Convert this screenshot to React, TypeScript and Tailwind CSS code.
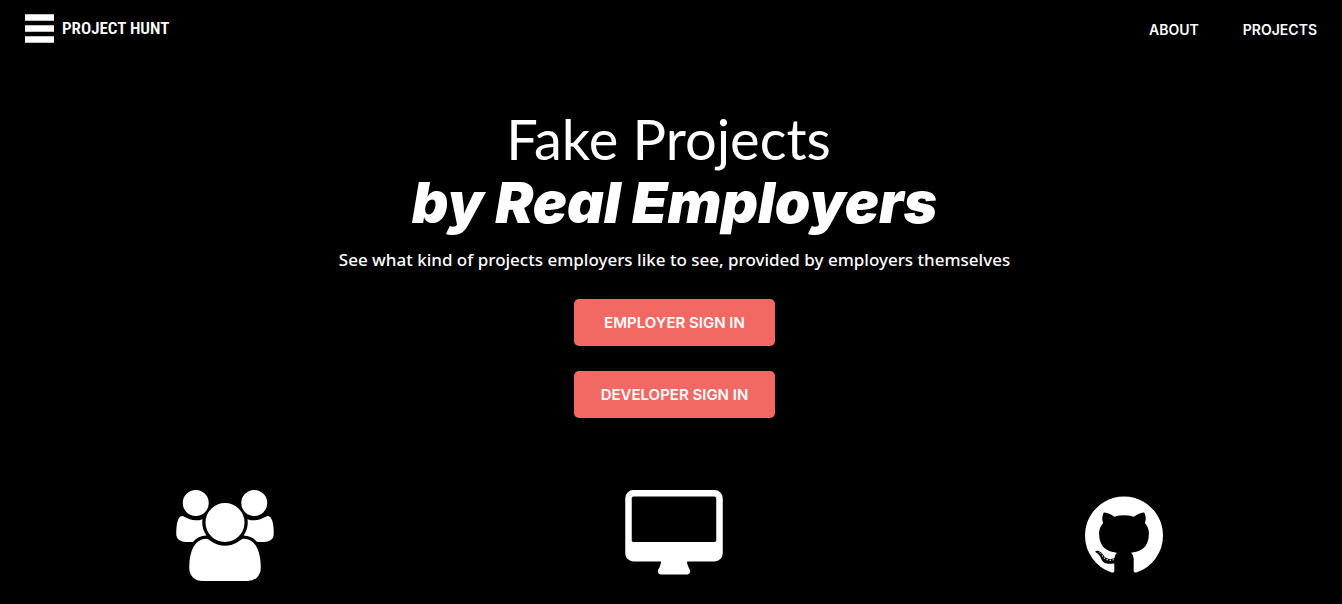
import React from "react";

type IconProps = { viewBox: string; path: string; className: string };

function Icon({ viewBox, path, className }: IconProps) {
  return (
    <svg viewBox={viewBox} className={className} fill="currentColor" aria-hidden="true">
      <path d={path} />
    </svg>
  );
}

const USERS =
  "M593 896q-162 5-265 128h-134q-82 0-138-40.5t-56-118.5q0-353 124-353 6 0 43.5 21t97.5 42.5 119 21.5q67 0 133-23-5 37-5 66 0 139 81 256zm1071 637q0 120-73 189.5t-194 69.5h-874q-121 0-194-69.5t-73-189.5q0-53 3.5-103.5t14-109 26.5-108.5 43-97.5 62-81 85.5-53.5 111.5-20q10 0 43 21.5t73 48 107 48 135 21.5 135-21.5 107-48 73-48 43-21.5q61 0 111.5 20t85.5 53.5 62 81 43 97.5 26.5 108.5 14 109 3.5 103.5zm-1024-1277q0 106-75 181t-181 75-181-75-75-181 75-181 181-75 181 75 75 181zm704 384q0 159-112.5 271.5t-271.5 112.5-271.5-112.5-112.5-271.5 112.5-271.5 271.5-112.5 271.5 112.5 112.5 271.5zm576 225q0 78-56 118.5t-138 40.5h-134q-103-123-265-128 81-117 81-256 0-29-5-66 66 23 133 23 59 0 119-21.5t97.5-42.5 43.5-21q124 0 124 353zm-128-609q0 106-75 181t-181 75-181-75-75-181 75-181 181-75 181 75 75 181z";

const DESKTOP =
  "M1792 992v-832q0-13-9.5-22.5t-22.5-9.5h-1600q-13 0-22.5 9.5t-9.5 22.5v832q0 13 9.5 22.5t22.5 9.5h1600q13 0 22.5-9.5t9.5-22.5zm128-832v1088q0 66-47 113t-113 47h-544q0 37 16 77.5t32 71 16 43.5q0 26-19 45t-45 19h-512q-26 0-45-19t-19-45q0-14 16-44t32-70 16-78h-544q-66 0-113-47t-47-113v-1088q0-66 47-113t113-47h1600q66 0 113 47t47 113z";

const GITHUB =
  "M768 128q209 0 385.5 103t279.5 279.5 103 385.5q0 251-146.5 451.5t-378.5 277.5q-27 5-40-7t-13-30q0-3 .5-76.5t.5-134.5q0-97-52-142 57-6 102.5-18t94-39 81-66.5 53-105 20.5-150.5q0-119-79-206 37-91-8-204-28-9-81 11t-92 44l-38 24q-93-26-192-26t-192 26q-16-11-42.5-27t-83.5-38.5-85-13.5q-45 113-8 204-79 87-79 206 0 85 20.5 150t52.5 105 80.5 67 94 39 102.5 18q-39 36-49 103-21 10-45 15t-57 5-65.5-21.5-55.5-62.5q-19-32-48.5-52t-49.5-24l-20-3q-21 0-29 4.5t-5 11.5 9 14 13 12l7 5q22 10 43.5 38t31.5 51l10 23q13 38 44 61.5t67 30 69.5 7 55.5-3.5l23-4q0 38 .5 88.5t.5 54.5q0 18-13 30t-40 7q-232-77-378.5-277.5t-146.5-451.5q0-209 103-385.5t279.5-279.5 385.5-103zm-477 1103q3-7-7-12-10-3-13 2-3 7 7 12 9 6 13-2zm31 34q7-5-2-16-10-9-16-3-7 5 2 16 10 10 16 3zm30 45q9-7 0-19-8-13-17-6-9 5 0 18t17 7zm42 42q8-8-4-19-12-12-20-3-9 8 4 19 12 12 20 3zm57 25q3-11-13-16-15-4-19 7t13 15q15 6 19-6zm63 5q0-13-17-11-16 0-16 11 0 13 17 11 16 0 16-11zm58-10q-2-11-18-9-16 3-14 15t18 8 14-14z";

function SignInButton({ children }: { children: React.ReactNode }) {
  return (
    <button
      type="button"
      className="h-[47px] w-[201px] rounded-[5px] bg-[#f26964] pt-px font-['Inter',sans-serif] text-[15px] font-semibold text-white hover:bg-[#e85b56]"
    >
      {children}
    </button>
  );
}

export default function App() {
  return (
    <div className="min-h-screen overflow-x-hidden bg-black font-['Lato',sans-serif] text-white">
      <header className="flex h-[60px] items-center justify-between px-[25px]">
        <a href="#" className="flex items-center gap-2 pb-1">
          <svg viewBox="0 0 29 29" className="h-[29px] w-[29px]" fill="currentColor" aria-hidden="true">
            <path d="M0 .3h29v6.4H0zM0 11.3h29v6.4H0zM0 22.3h29v6.4H0z" />
          </svg>
          <span className="pt-0.5 font-['Roboto_Condensed','Liberation_Sans_Narrow',sans-serif] text-[17px] font-semibold">
            PROJECT HUNT
          </span>
        </a>
        <nav className="flex gap-11 font-['Inter',sans-serif] text-sm font-semibold">
          <a href="#about">ABOUT</a>
          <a href="#projects">PROJECTS</a>
        </nav>
      </header>

      <main className="-mr-[7px]">
        <section className="flex flex-col items-center pt-12 text-center">
          <h1>
            <span className="block pr-3 text-[56px] leading-[62px]">Fake Projects</span>
            <span className="block font-['Inter',sans-serif] text-[57px] leading-[66px] font-black italic">
              by Real Employers
            </span>
          </h1>
          <p className="pt-3 font-['Noto_Sans',sans-serif] text-[17px] leading-6 font-medium">
            See what kind of projects employers like to see, provided by employers themselves
          </p>
          <div className="flex flex-col gap-[25px] pt-[27px]">
            <SignInButton>EMPLOYER SIGN IN</SignInButton>
            <SignInButton>DEVELOPER SIGN IN</SignInButton>
          </div>
        </section>

        <section className="grid grid-cols-3 justify-items-center pt-[72px]">
          <Icon viewBox="0 0 1920 1792" path={USERS} className="h-[91px] w-[98px]" />
          <Icon viewBox="0 0 1920 1792" path={DESKTOP} className="h-[91px] w-[98px]" />
          <Icon viewBox="0 0 1536 1792" path={GITHUB} className="h-[91px] w-[78px]" />
        </section>
      </main>
    </div>
  );
}
